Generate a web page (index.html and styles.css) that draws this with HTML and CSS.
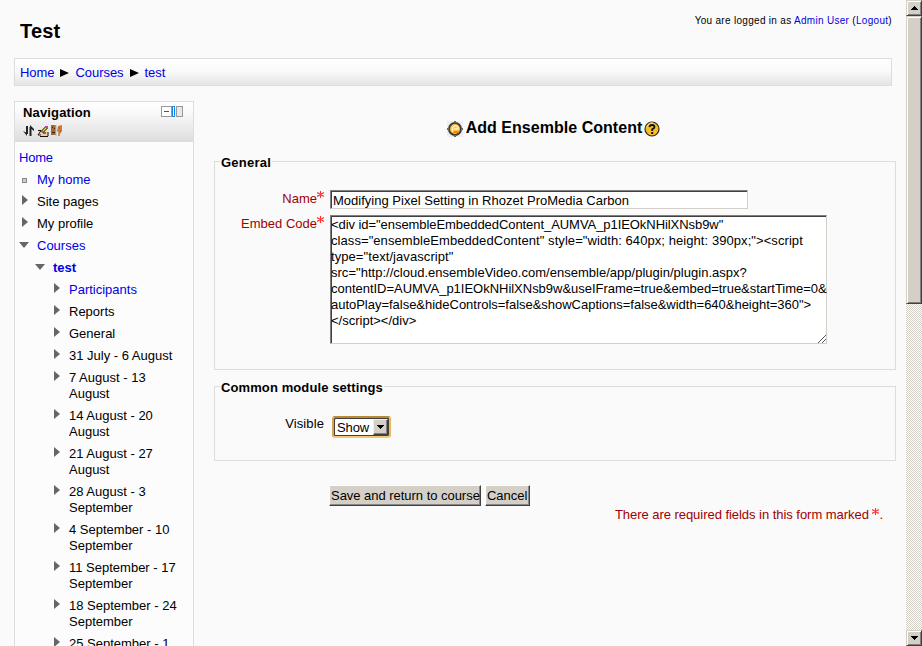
FILE: index.html
```
<!DOCTYPE html>
<html lang="en">
<head>
<meta charset="utf-8">
<title>Test</title>
<link rel="stylesheet" href="styles.css">
</head>
<body>
<div class="window">
<div class="page">
  <header class="header">
    <h1>Test</h1>
    <div class="login">You are logged in as <a>Admin User</a> (<a>Logout</a>)</div>
  </header>
  <nav class="crumbs"><a>Home</a><i class="sep"></i><a class="c2">Courses</a><i class="sep"></i><a>test</a></nav>
  <div class="columns">
    <aside class="block">
      <div class="block-head">
        <div class="block-title"><h2>Navigation</h2>
          <svg class="dock" width="22" height="11" shape-rendering="crispEdges"><path d="M.5.5h10v10H.5z" fill="#fff" stroke="#999"/><path d="M3 5h5v1H3z" fill="#555"/><path d="M11.5.5h2v10h-2z" fill="#fff" stroke="#1688e8"/><path d="M15.500.5h6v10h-6z" fill="#e8e8e8" stroke="#999"/></svg>
        </div>
        <div class="tools">
          <svg width="12" height="12"><path d="M4 1v8M7.500 11V2" stroke="#222" stroke-width="2"/><path d="M0 6l4 5V8zM7 0l4 4v2L7 3z" fill="#222"/></svg>
          <svg width="12" height="12"><path d="M3 6l4-1 4 2v4H4L2 9z" fill="#f5cda5"/><path d="M1 5.500h3L1 10h3M3 11.500h8M6 8h3M11 7v4" fill="none" stroke="#111"/><path d="M5 7l5-5" stroke="#111" stroke-width="3"/><path d="M5.500 6.500l4-4" stroke="#f5e61b" stroke-width="1.500"/><path d="M9 1h2v2H9z" fill="#d33bb8"/></svg>
          <svg width="12" height="12"><path d="M0 0h5v10H0z" fill="#a06a38"/><path d="M1 2h1v1H1zM3 3h1v1H3zM1 7h3v1H1z" fill="#3d2510"/><path d="M5 0v11" stroke="#dfb98a"/><path d="M7 1l4-1v6L9 9 6 6z" fill="#cf7a3c"/><path d="M8 3h1M9 6h1M8 8v3" stroke="#8d481c"/></svg>
        </div>
      </div>
      <ul class="tree">
        <li class="root"><a>Home</a></li>
        <li><i class="dot"></i><a>My home</a></li>
        <li><i class="shut"></i>Site pages</li>
        <li><i class="shut"></i>My profile</li>
        <li><i class="open"></i><a>Courses</a></li>
        <li class="l2"><i class="open"></i><a><b>test</b></a></li>
        <li class="l3"><i class="shut"></i><a>Participants</a></li>
        <li class="l3"><i class="shut"></i>Reports</li>
        <li class="l3"><i class="shut"></i>General</li>
        <li class="l3"><i class="shut"></i>31 July - 6 August</li>
        <li class="l3"><i class="shut"></i>7 August - 13<br>August</li>
        <li class="l3"><i class="shut"></i>14 August - 20<br>August</li>
        <li class="l3"><i class="shut"></i>21 August - 27<br>August</li>
        <li class="l3"><i class="shut"></i>28 August - 3<br>September</li>
        <li class="l3"><i class="shut"></i>4 September - 10<br>September</li>
        <li class="l3"><i class="shut"></i>11 September - 17<br>September</li>
        <li class="l3"><i class="shut"></i>18 September - 24<br>September</li>
        <li class="l3"><i class="shut"></i>25 September - 1</li>
      </ul>
    </aside>
    <main>
      <div class="heading">
        <svg width="16" height="16"><path d="M0 0h16v16H0z" fill="#eee"/><circle cx="8" cy="8" r="6" fill="#ffc33a" stroke="#3d3d3d" stroke-width="2"/><path d="M8 0v2M8 14v2M0 8h2M14 8h2" stroke="#666" stroke-width="2"/><path d="M5.500 11V6.500L7.500 5h2l1.500 1.500V8H7" fill="none" stroke="#fff2c0" stroke-width="1.300"/><path d="M6.500 11h5" stroke="#f28a00" stroke-width="2"/></svg>
        <h2>Add Ensemble Content</h2>
        <svg width="16" height="16"><circle cx="8" cy="8" r="7" fill="#f9bd28" stroke="#33291a" stroke-width="1.200"/><path d="M3 6a5 5 0 0 1 6-4" stroke="#ffe694" fill="none"/><path d="M5.500 6.200Q5.700 4 8 4t2.500 2Q10.500 7.200 8.200 8.300V10" fill="none" stroke="#111" stroke-width="1.800"/><path d="M7.200 11h2v2h-2z" fill="#111"/></svg>
      </div>
      <fieldset class="general">
        <legend>General</legend>
        <div class="row name"><label class="req">Name<svg class="star" width="7" height="7"><use href="#ast"/></svg></label><div class="input"><span>Modifying Pixel Setting in Rhozet ProMedia Carbon</span></div></div>
        <div class="row code"><label class="req">Embed Code<svg class="star" width="7" height="7"><use href="#ast"/></svg></label>
          <div class="area"><div class="t1">&lt;div id="ensembleEmbeddedContent_AUMVA_p1IEOkNHilXNsb9w"</div><div class="t2">class="ensembleEmbeddedContent" style="width: 640px; height: 390px;"&gt;&lt;script</div><div class="t3">type="text/javascript"</div><div class="t4">src="http://cloud.ensembleVideo.com/ensemble/app/plugin/plugin.aspx?</div><div class="t5">contentID=AUMVA_p1IEOkNHilXNsb9w&amp;useIFrame=true&amp;embed=true&amp;startTime=0&amp;</div><div class="t6">autoPlay=false&amp;hideControls=false&amp;showCaptions=false&amp;width=640&amp;height=360"&gt;</div><div class="t7">&lt;/script&gt;&lt;/div&gt;</div>
          <svg class="grip" width="8" height="8"><path d="M0 8l8-8M4 8l4-4" stroke="#555"/></svg></div>
        </div>
      </fieldset>
      <fieldset class="common">
        <legend class="lg2">Common module settings</legend>
        <div class="row vis"><label>Visible</label><div class="select"><span>Show</span><i class="drop"><svg width="7" height="4" shape-rendering="crispEdges"><path d="M0 0h7v1H6v1H5v1H4v1H3V3H2V2H1V1H0z"/></svg></i></div></div>
      </fieldset>
      <div class="buttons"><div class="btn save">Save and return to course</div><div class="btn cancel">Cancel</div></div>
      <div class="note">There are required fields in this form marked <svg class="star" width="7" height="7"><g id="ast"><path d="M3.500 0v7M0 1.500l7 4M7 1.500l-7 4" stroke="#f33" stroke-width="1.100"/></g></svg>.</div>
    </main>
  </div>
</div>
<div class="scrollbar">
  <div class="sb up"><svg width="7" height="4" shape-rendering="crispEdges"><path d="M3 0h1v1h1v1h1v1h1v1H0V3h1V2h1V1h1z"/></svg></div>
  <div class="sb thumb"></div>
  <div class="track"></div>
  <div class="sb down"><svg width="7" height="4" shape-rendering="crispEdges"><path d="M0 0h7v1H6v1H5v1H4v1H3V3H2V2H1V1H0z"/></svg></div>
</div>
</div>
</body>
</html>
```
FILE: styles.css
```
* { box-sizing: border-box; }
body { margin: 0; overflow: hidden; background: #fafafa; color: #000; font: 13px/16px "Liberation Sans", Arial, sans-serif; }
h1, h2, ul, fieldset, legend { margin: 0; padding: 0; }
a { color: #0000e6; }
svg { display: block; flex: none; }
.window { display: flex; width: 922px; height: 646px; overflow: hidden; }
.page { width: 906px; padding: 0 14px; overflow: hidden; }
.header { height: 58px; display: flex; justify-content: space-between; padding-left: 6px; white-space: nowrap; }
h1 { font-size: 20px; line-height: 24px; padding-top: 19px; letter-spacing: .2px; }
.login { font-size: 10px; line-height: 14px; padding-top: 14px; letter-spacing: .3px; }
.crumbs { height: 28px; border: 1px solid #ddd; background: linear-gradient(#fff, #fafafa 45%, #e4e4e4); display: flex; align-items: center; padding: 1px 0 0 5px; letter-spacing: -.05px; }
.sep { border-left: 9px solid #000; border-top: 4.500px solid transparent; border-bottom: 4.500px solid transparent; margin: 0 6px; }
.columns { display: flex; margin-top: 15px; height: 560px; }
.block { width: 180px; height: 560px; border: 1px solid #ddd; background: #fcfcfc; overflow: hidden; flex: none; }
.block-head { height: 40px; background: linear-gradient(#fff, #f8f8f8 30%, #ddd); padding: 3px 10px 0 8px; }
.block-title { display: flex; justify-content: space-between; }
.block-title h2 { font-size: 13px; line-height: 16px; letter-spacing: .15px; }
.dock { margin-top: 1px; }
.tools { display: flex; gap: 2px; margin-top: 4px; }
.tree { list-style: none; padding: 5px 0 0 4px; }
.tree li { padding: 3px 0 3px 18px; position: relative; white-space: nowrap; }
.tree li.root { padding-left: 0; letter-spacing: -.2px; }
.tree li.l2 { margin-left: 16px; }
.tree li.l3 { margin-left: 32px; }
.tree i { position: absolute; }
.shut { left: 3px; top: 4px; border-left: 6px solid #666; border-top: 5.500px solid transparent; border-bottom: 5.500px solid transparent; }
.open { left: 0; top: 7px; border-top: 6px solid #666; border-left: 5.500px solid transparent; border-right: 5.500px solid transparent; }
.dot { left: 3px; top: 9px; width: 5px; height: 5px; border: 1px solid #888; background: #ccc; }
main { width: 682px; margin-left: 20px; flex: none; }
.heading { height: 53px; display: flex; justify-content: center; padding: 20px 3px 0 0; }
.heading h2 { font-size: 16px; line-height: 14px; margin: 0 2px 0 3px; white-space: nowrap; letter-spacing: .03px; }
fieldset { border: 1px solid #ddd; min-width: 0; }
legend { position: relative; top: 1px; font-weight: bold; height: 15px; line-height: 15px; margin-left: 5px; padding: 0 1px; letter-spacing: .25px; }
.lg2 { letter-spacing: .1px; }
.general { height: 216px; }
.common { height: 82px; margin-top: 9px; }
.row { display: flex; }
.row label { width: 109px; display: flex; justify-content: flex-end; flex: none; padding-top: 1px; }
.row label.req { color: #a00000; }
.star { display: inline-block; }
.name { padding-top: 21px; }
.name .input { margin-left: 6px; }
.input { width: 418px; height: 19px; border: 1px solid; border-color: #808080 #d4d0c8 #d4d0c8 #808080; background: #fff; padding: 2px 2px; line-height: 16px; white-space: nowrap; box-shadow: inset 1px 1px #404040; letter-spacing: .01px; }
.code { padding-top: 6px; }
.area { position: relative; margin-left: 6px; width: 497px; height: 129px; background: #fff; border: 1px solid; border-color: #808080 #d4d0c8 #d4d0c8 #808080; box-shadow: inset 1px 1px #404040; padding-top: 1px; white-space: nowrap; }
.area div { width: max-content; }
.t1 { letter-spacing: -.06px; }
.t2 { letter-spacing: .07px; }
.t3 { letter-spacing: .07px; }
.t4 { letter-spacing: .02px; }
.t5 { letter-spacing: -.02px; }
.t6 { letter-spacing: -.02px; }
.grip { position: absolute; right: 0; bottom: 0; }
.vis { padding-top: 20px; }
.vis label { padding-top: 2px; letter-spacing: .1px; }
.select { display: flex; margin: 2px 0 0 8px; width: 59px; height: 22px; border: 2px solid; border-color: #b88a36 #e9b95b #f0c878 #d9a548; border-radius: 3px; background: #fff; box-shadow: inset 1px 1px #404040, inset -1px -1px #404040; padding: 1px 1px 1px 3px; line-height: 18px; }
.select span { width: 36px; letter-spacing: -.1px; }
.drop { width: 15px; height: 16px; background: #d4d0c8; border: 1px solid; border-color: #eee #404040 #404040 #eee; box-shadow: inset -1px -1px #808080; display: flex; align-items: center; justify-content: center; flex: none; }
.buttons { display: flex; gap: 4px; margin: 24px 0 0 115px; }
.btn { height: 21px; background: #d4d0c8; border: 1px solid; border-color: #fff #404040 #404040 #fff; box-shadow: inset -1px -1px #888; line-height: 20px; white-space: nowrap; padding-left: 1px; letter-spacing: -.03px; }
.save { width: 152px; }
.cancel { width: 45px; }
.note { color: #a00000; text-align: right; padding: 1px 13px 0 0; white-space: nowrap; letter-spacing: -.04px; }
.note .star { vertical-align: 4px; }
.scrollbar { width: 16px; height: 646px; display: flex; flex-direction: column; }
.sb { background: #d4d0c8; border: 1px solid; border-color: #d4d0c8 #404040 #404040 #d4d0c8; box-shadow: inset 1px 1px #fff, inset -1px -1px #808080; display: flex; align-items: center; justify-content: center; }
.up, .down { height: 16px; }
.thumb { height: 288px; }
.track { flex: 1; background: repeating-conic-gradient(#fff 0 25%, #d4d0c8 0 50%) 0 0 / 2px 2px; }
```
